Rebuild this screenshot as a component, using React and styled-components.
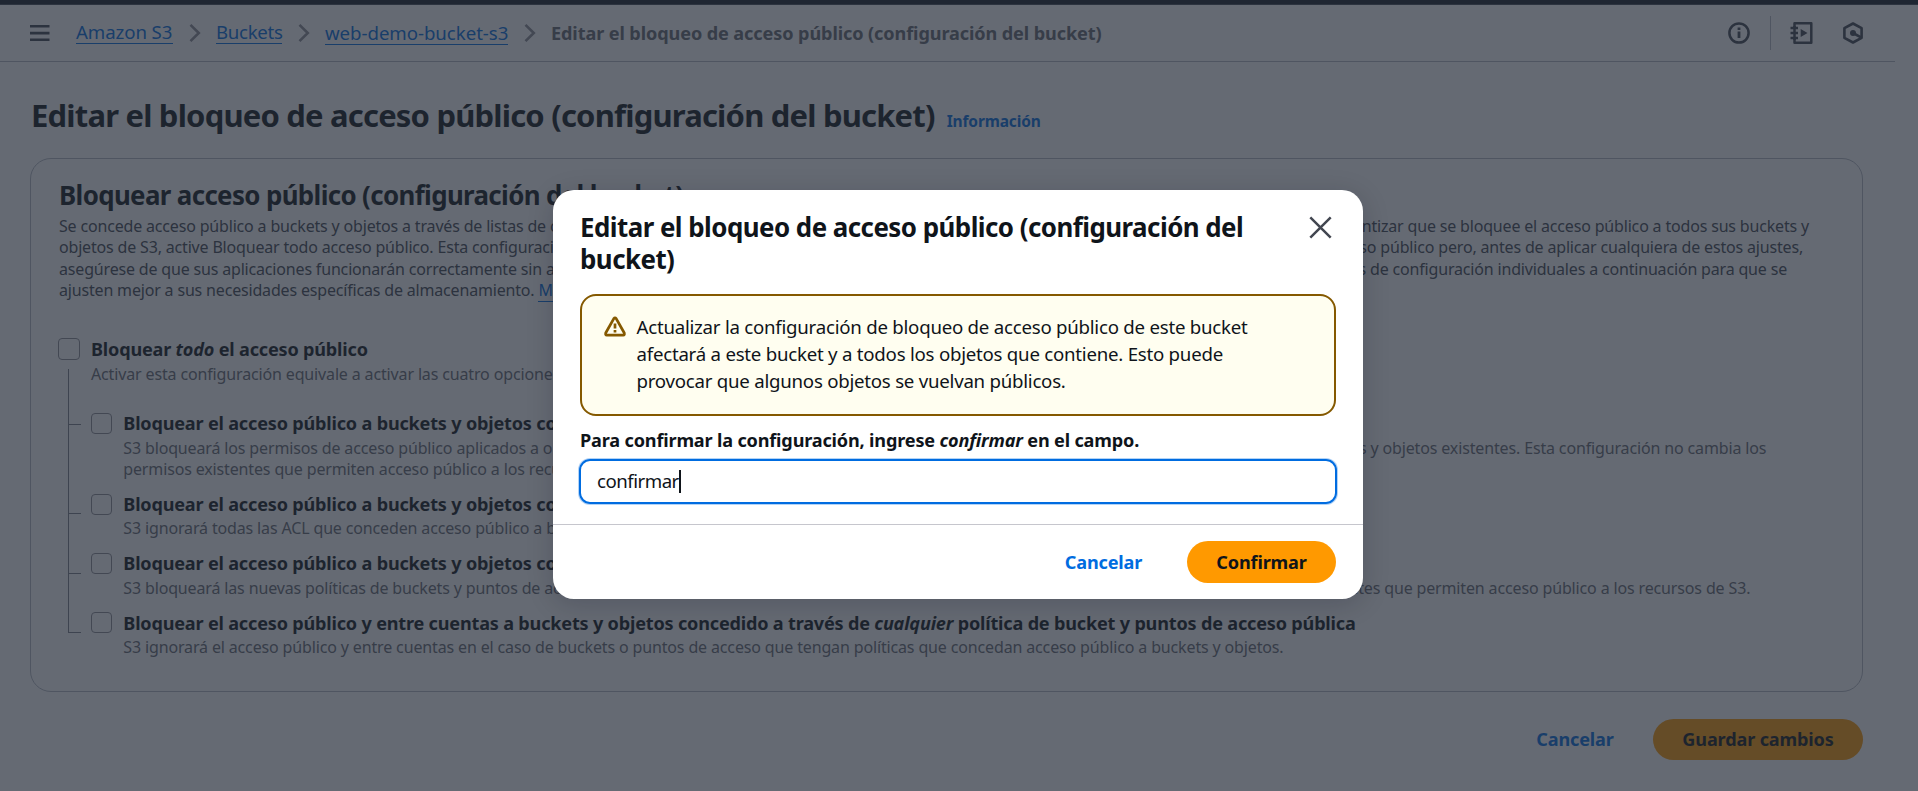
import React from "react";
import styled, { createGlobalStyle, css } from "styled-components";

const GlobalStyle = createGlobalStyle`
  *, *::before, *::after { box-sizing: border-box; }
  html, body { margin: 0; overflow: hidden; }
  body {
    background: #ffffff;
    color: #0f141a;
    font-family: "Noto Sans", "Open Sans", sans-serif;
    font-size: 18.67px;
    line-height: 26.67px;
  }
  h1, h2, p { margin: 0; }
  svg { display: block; flex: none; }
`;

const Page = styled.div`
  position: relative;
  display: flex;
  flex-direction: column;
  width: 1918px;
  height: 791px;
  overflow: hidden;
  background: #ffffff;
  white-space: nowrap;
`;

const TopStrip = styled.div`
  flex: none;
  height: 5px;
  background: #161d26;
  border-bottom: 1px solid #424650;
`;

const Toolbar = styled.header`
  display: flex;
  align-items: center;
  flex: none;
  height: 57px;
  width: 1895px;
  padding: 0 31px 0 29px;
  border-bottom: 1px solid #b4b8c2;
`;

const MenuButton = styled.button`
  display: flex;
  padding: 0;
  margin-right: 26px;
  border: 0;
  background: none;
`;

const Breadcrumbs = styled.nav`
  display: flex;
  align-items: center;
  flex: 1;
`;

const Crumb = styled.a`
  height: 24px;
  line-height: 24px;
  width: ${(p) => p.$width}px;
  margin-bottom: ${(p) => p.$lift || 0}px;
  border-bottom: 1.4px solid #006ce0;
  color: #006ce0;
  letter-spacing: ${(p) => p.$spacing}px;
`;

const CurrentCrumb = styled.span`
  color: #656871;
  font-size: 18.1px;
  font-weight: 700;
  letter-spacing: -0.1px;
  line-height: 24px;
`;

const Chevron = styled.svg`
  width: 12px;
  height: 20px;
  margin: 0 15px 0 16px;
  fill: none;
  stroke: #8c8c94;
  stroke-width: 2.6;
`;

const ToolIcons = styled.div`
  display: flex;
  align-items: center;
  color: #424650;
`;

const Separator = styled.i`
  width: 1px;
  height: 34px;
  margin: 0 19px 0 20px;
  background: #b4b8c2;
`;

const HexSlot = styled.span`
  margin-left: 29px;
`;

const Main = styled.main`
  display: flex;
  flex-direction: column;
  padding: 33px 55px 0 30px;
`;

const TitleRow = styled.div`
  display: flex;
  align-items: baseline;
  gap: 12px;
  height: 40px;
  margin-bottom: 23px;
`;

const PageTitle = styled.h1`
  padding-left: 1px;
  font-size: 31px;
  line-height: 40px;
  letter-spacing: -0.81px;
`;

const InfoLink = styled.a`
  color: #006ce0;
  font-size: 15.5px;
  font-weight: 700;
  letter-spacing: -0.13px;
`;

const Card = styled.section`
  height: 534px;
  padding: 20px 52px 0 28px;
  border: 1px solid #b4b8c2;
  border-radius: 21px;
`;

const CardTitle = styled.h2`
  font-size: 25.9px;
  line-height: 32px;
  letter-spacing: -0.64px;
`;

const Intro = styled.div`
  margin-top: 5px;
  color: #424650;
  font-size: 16px;
  line-height: 21.33px;
  letter-spacing: -0.175px;
`;

const SplitLine = styled.div`
  display: flex;
  justify-content: space-between;
  width: ${(p) => p.$width}px;
`;

const TextLink = styled.a`
  color: #006ce0;
  border-bottom: 1.4px solid #006ce0;
`;

const Options = styled.div`
  display: grid;
  grid-template-columns: 32px 1fr;
  margin-top: 35px;
`;

const Spine = styled.div`
  display: flex;
  flex-direction: column;
  padding-top: 2px;
`;

const Checkbox = styled.span`
  flex: none;
  width: 21.3px;
  height: 21.3px;
  border: 1.6px solid #8c8c94;
  border-radius: 4px;
`;

const ParentCheckbox = styled(Checkbox)`
  margin-left: -0.6px;
`;

const Branch = styled.i`
  width: 13px;
  height: ${(p) => p.$height}px;
  margin-left: 9px;
  border: solid #7d8089;
  border-width: 0 0 1px 1px;
  &:nth-child(2) { margin-top: 9px; }
`;

const OptionList = styled.div`
  display: flex;
  flex-direction: column;
  gap: 11.3px;
`;

const Option = styled.div`
  display: flex;
  gap: 11px;
  ${(p) => p.$parent && css`margin-bottom: 14.7px;`}
  & > ${Checkbox} { margin-top: 2.6px; }
`;

const OptionLabel = styled.div`
  font-size: 18.1px;
  font-weight: 700;
  line-height: 26.67px;
  letter-spacing: -0.195px;
`;

const OptionText = styled.div`
  padding-top: 0.7px;
  margin-bottom: -0.7px;
  color: #656871;
  font-size: 16px;
  line-height: 21.33px;
  letter-spacing: -0.145px;
`;

const Actions = styled.div`
  display: flex;
  justify-content: flex-end;
  gap: ${(p) => p.$gap}px;
`;

const PageActions = styled(Actions)`
  margin-top: 27px;
`;

const Button = styled.button`
  display: flex;
  align-items: center;
  justify-content: center;
  height: ${(p) => p.$height || 41}px;
  width: ${(p) => p.$width}px;
  padding: 0 0 1px;
  border: 0;
  border-radius: 27px;
  font: 700 18.1px "Noto Sans", "Open Sans", sans-serif;
  letter-spacing: ${(p) => p.$spacing || 0}px;
  color: ${(p) => (p.$primary ? "#0f141a" : "#006ce0")};
  background: ${(p) => (p.$primary ? "#ff9900" : "none")};
`;

const Overlay = styled.div`
  position: absolute;
  inset: 0;
  display: flex;
  align-items: flex-start;
  padding: 190px 0 0 553px;
  background: rgba(35, 43, 55, 0.7);
`;

const Dialog = styled.div`
  width: 810px;
  height: 409px;
  display: flex;
  flex-direction: column;
  border-radius: 21px;
  background: #ffffff;
  box-shadow: 0 5px 27px 1px rgba(0, 7, 22, 0.16);
`;

const DialogHeader = styled.div`
  display: flex;
  justify-content: space-between;
  padding: 21px 31px 0 27px;
  height: 104px;
`;

const DialogTitle = styled.h2`
  font-size: 25.9px;
  line-height: 32px;
  letter-spacing: -0.53px;
`;

const CloseIcon = styled.svg`
  margin-top: 5px;
  stroke: #424650;
  stroke-width: 2.5;
`;

const DialogBody = styled.div`
  display: flex;
  flex-direction: column;
  height: 230px;
  padding: 0 27px;
`;

const Alert = styled.div`
  display: flex;
  gap: 11px;
  height: 122px;
  padding: 17px 21.5px;
  border: 2px solid #855900;
  border-radius: 16px;
  background: #fffef0;
`;

const AlertIcon = styled.span`
  padding-top: 3px;
`;

const AlertText = styled.p`
  line-height: 27px;
  letter-spacing: -0.24px;
`;

const FieldLabel = styled.label`
  margin-top: 11px;
  font-size: 18.1px;
  font-weight: 700;
  letter-spacing: -0.17px;
`;

const Field = styled.div`
  display: flex;
  align-items: center;
  height: 45px;
  margin: 5px -1px 0;
  padding: 0 0 0 16px;
  border: 2px solid #006ce0;
  border-radius: 11px;
  box-shadow: 0 0 0 1px rgba(0, 108, 224, 0.3);
  letter-spacing: -0.5px;
`;

const Caret = styled.i`
  width: 2px;
  height: 23px;
  background: #0f141a;
`;

const DialogFooter = styled.div`
  flex: 1;
  padding: 16px 27px 0;
  border-top: 1px solid #c6c6cd;
`;

function MenuIcon() {
  return (
    <svg width="21" height="18" viewBox="0 0 21 18" stroke="#424650" strokeWidth="2.6">
      <path d="M1 2.3h19.5M1 9.1h19.5M1 15.8h19.5" />
    </svg>
  );
}

function CrumbChevron() {
  return (
    <Chevron viewBox="0 0 12 20">
      <path d="M1.5 1.8 9.8 10 1.5 18.2" />
    </Chevron>
  );
}

function InfoIcon() {
  return (
    <svg width="22" height="22" viewBox="0 0 22 22" fill="none" stroke="currentColor" strokeWidth="2.5">
      <circle cx="11" cy="11" r="9.6" />
      <path d="M11 9.4v6.6M11 5.5v2.6" strokeWidth="2.8" />
    </svg>
  );
}

function TutorialIcon() {
  return (
    <svg width="23" height="22" viewBox="0 0 23 22" fill="none" stroke="currentColor" strokeWidth="2.5">
      <path d="M4.5 5V1.3H21.3V20.7H4.5V17" strokeLinejoin="round" />
      <path d="M4.5 4v14" />
      <path d="M.5 6h7.5M.5 11h7.5M.5 16h7.5" strokeWidth="2.3" />
      <path d="M10.7 7v8l6.8-4z" fill="currentColor" stroke="none" />
    </svg>
  );
}

function HexagonIcon() {
  return (
    <svg width="22" height="22" viewBox="0 0 22 22" fill="none" stroke="currentColor" strokeWidth="2.6">
      <path d="M11 1.5 19.6 6.2V15.8L11 20.5 2.4 15.8V6.2z" strokeLinejoin="round" />
      <path d="M11 11l8 4.3" />
      <circle cx="11" cy="11" r="3" fill="currentColor" stroke="none" />
    </svg>
  );
}

function WarningIcon() {
  return (
    <svg width="22" height="22" viewBox="0 0 22 22" fill="none" stroke="#855900" strokeWidth="2.7">
      <path d="M9.8 2.6 1.7 17Q1.2 19.2 2.8 19.2H19.2Q20.8 19.2 20.3 17L12.2 2.6Q11 1 9.8 2.6z" strokeLinejoin="round" />
      <path d="M11 7.4v5.2M11 14v2.5" />
    </svg>
  );
}

const childOptions = [
  {
    label: <>Bloquear el acceso público a buckets y objetos concedido a través de <em>nuevas</em> listas de control de acceso (ACL)</>,
    lines: [
      [1643, "S3 bloqueará los permisos de acceso público aplicados a objetos o buckets", "de ACL de acceso público nuevas para buckets y objetos existentes. Esta configuración no cambia los"],
      [1643, "permisos existentes que permiten acceso público a los recursos de S3 mediante ACL."],
    ],
  },
  {
    label: <>Bloquear el acceso público a buckets y objetos concedido a través de <em>cualquier</em> lista de control de acceso (ACL)</>,
    lines: [[1643, "S3 ignorará todas las ACL que conceden acceso público a buckets y objetos."]],
  },
  {
    label: <>Bloquear el acceso público a buckets y objetos concedido a través de políticas de bucket <em>nuevas</em></>,
    lines: [[1627, "S3 bloqueará las nuevas políticas de buckets y puntos de acceso que concedan acceso", "no cambia las políticas existentes que permiten acceso público a los recursos de S3."]],
  },
  {
    label: <>Bloquear el acceso público y entre cuentas a buckets y objetos concedido a través de <em>cualquier</em> política de bucket y puntos de acceso pública</>,
    lines: [[1643, "S3 ignorará el acceso público y entre cuentas en el caso de buckets o puntos de acceso que tengan políticas que concedan acceso público a buckets y objetos."]],
  },
];

function PageContent() {
  return (
    <>
      <TopStrip />
      <Toolbar>
        <MenuButton><MenuIcon /></MenuButton>
        <Breadcrumbs>
          <Crumb $width={97} $spacing={-0.1} $lift={2}>Amazon S3</Crumb>
          <CrumbChevron />
          <Crumb $width={66} $spacing={-0.3} $lift={2}>Buckets</Crumb>
          <CrumbChevron />
          <Crumb $width={183} $spacing={-0.05}>web-demo-bucket-s3</Crumb>
          <CrumbChevron />
          <CurrentCrumb>Editar el bloqueo de acceso público (configuración del bucket)</CurrentCrumb>
        </Breadcrumbs>
        <ToolIcons>
          <InfoIcon />
          <Separator />
          <TutorialIcon />
          <HexSlot><HexagonIcon /></HexSlot>
        </ToolIcons>
      </Toolbar>
      <Main>
        <TitleRow>
          <PageTitle>Editar el bloqueo de acceso público (configuración del bucket)</PageTitle>
          <InfoLink>Información</InfoLink>
        </TitleRow>
        <Card>
          <CardTitle>Bloquear acceso público (configuración del bucket)</CardTitle>
          <Intro>
            <SplitLine $width={1750}>
              <span>Se concede acceso público a buckets y objetos a través de listas de control de acceso (ACL).</span>
              <span>Para garantizar que se bloquee el acceso público a todos sus buckets y</span>
            </SplitLine>
            <SplitLine $width={1744}>
              <span>objetos de S3, active Bloquear todo acceso público. Esta configuración se aplica a este bucket.</span>
              <span>AWS recomienda bloquear todo acceso público pero, antes de aplicar cualquiera de estos ajustes,</span>
            </SplitLine>
            <SplitLine $width={1728}>
              <span>asegúrese de que sus aplicaciones funcionarán correctamente sin acceso público.</span>
              <span>Puede personalizar los valores de configuración individuales a continuación para que se</span>
            </SplitLine>
            <SplitLine $width={1728}>
              <span>ajusten mejor a sus necesidades específicas de almacenamiento. <TextLink>Más información</TextLink></span>
            </SplitLine>
          </Intro>
          <Options>
            <Spine>
              <ParentCheckbox />
              <Branch $height={56} />
              <Branch $height={89} />
              <Branch $height={60} />
              <Branch $height={59} />
            </Spine>
            <OptionList>
              <Option $parent>
                <div>
                  <OptionLabel>Bloquear <em>todo</em> el acceso público</OptionLabel>
                  <OptionText>Activar esta configuración equivale a activar las cuatro opciones que aparecen a continuación.</OptionText>
                </div>
              </Option>
              {childOptions.map((child, i) => (
                <Option key={i}>
                  <Checkbox />
                  <div>
                    <OptionLabel>{child.label}</OptionLabel>
                    <OptionText>
                      {child.lines.map(([width, left, right]) => (
                        <SplitLine key={left} $width={width}>
                          <span>{left}</span>
                          {right && <span>{right}</span>}
                        </SplitLine>
                      ))}
                    </OptionText>
                  </div>
                </Option>
              ))}
            </OptionList>
          </Options>
        </Card>
        <PageActions $gap={10}>
          <Button $width={136} $spacing={-0.15}>Cancelar</Button>
          <Button $primary $width={210} $spacing={-0.15}>Guardar cambios</Button>
        </PageActions>
      </Main>
    </>
  );
}

function ConfirmDialog() {
  return (
    <Dialog role="dialog">
      <DialogHeader>
        <DialogTitle>
          Editar el bloqueo de acceso público (configuración del
          <br />
          bucket)
        </DialogTitle>
        <CloseIcon width="23" height="23" viewBox="0 0 23 23">
          <path d="M1.3 1.3 21.7 21.7M21.7 1.3 1.3 21.7" />
        </CloseIcon>
      </DialogHeader>
      <DialogBody>
        <Alert>
          <AlertIcon><WarningIcon /></AlertIcon>
          <AlertText>
            Actualizar la configuración de bloqueo de acceso público de este bucket
            <br />
            afectará a este bucket y a todos los objetos que contiene. Esto puede
            <br />
            provocar que algunos objetos se vuelvan públicos.
          </AlertText>
        </Alert>
        <FieldLabel>
          Para confirmar la configuración, ingrese <em>confirmar</em> en el campo.
        </FieldLabel>
        <Field>
          confirmar
          <Caret />
        </Field>
      </DialogBody>
      <DialogFooter>
        <Actions $gap={18}>
          <Button $width={131} $height={42} $spacing={-0.15}>Cancelar</Button>
          <Button $primary $width={149} $height={42} $spacing={-0.15}>Confirmar</Button>
        </Actions>
      </DialogFooter>
    </Dialog>
  );
}

export default function App() {
  return (
    <Page>
      <GlobalStyle />
      <PageContent />
      <Overlay>
        <ConfirmDialog />
      </Overlay>
    </Page>
  );
}
